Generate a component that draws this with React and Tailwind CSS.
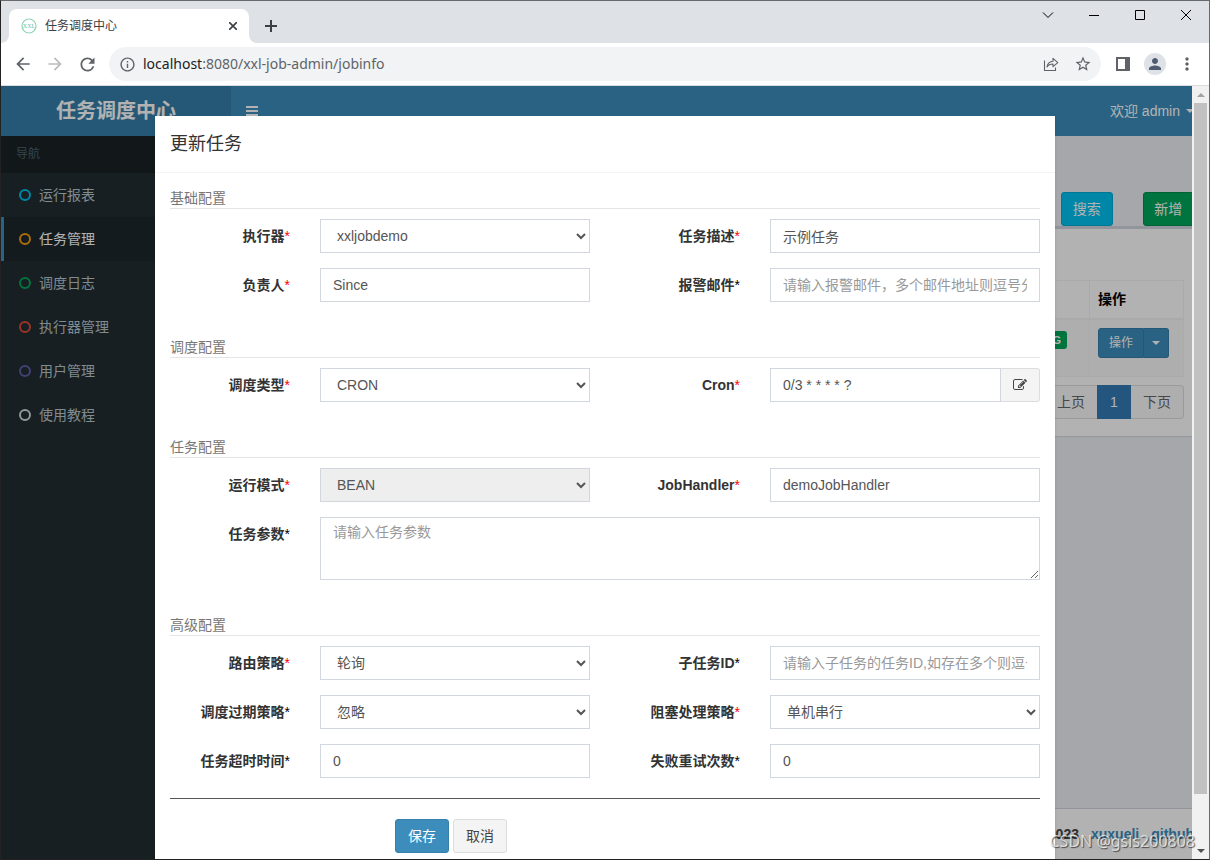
import { MdArrowBack, MdArrowForward, MdRefresh, MdInfoOutline, MdStarBorder, MdPerson, MdMoreVert } from "react-icons/md";
import clsx from "clsx";

const NAV = [
  { text: "运行报表", color: "border-[#00c0ef]" },
  { text: "任务管理", color: "border-[#f39c12]", active: true },
  { text: "调度日志", color: "border-[#00a65a]" },
  { text: "执行器管理", color: "border-[#dd4b39]" },
  { text: "用户管理", color: "border-[#605ca8]" },
  { text: "使用教程", color: "border-[#d2d6de]" },
];

function Caret({ className }) {
  return (
    <svg viewBox="0 0 8 4" className={clsx("w-2 h-1 fill-current", className)} aria-hidden="true">
      <path d="M0 0h8L4 4z" />
    </svg>
  );
}

function EditIcon() {
  return (
    <svg viewBox="0 0 1792 1792" className="w-3.5 h-3.5 fill-current" aria-hidden="true">
      <path d="M888 1184l116-116-152-152-116 116v56h96v96h56zm440-720q-16-16-33 1l-350 350q-17 17-1 33t33-1l350-350q17-17 1-33zm80 594v190q0 119-84.5 203.5t-203.5 84.5h-832q-119 0-203.5-84.5t-84.5-203.5v-832q0-119 84.5-203.5t203.5-84.5h832q63 0 117 25 15 7 18 23 3 17-9 29l-49 49q-14 14-32 8-23-6-45-6h-832q-66 0-113 47t-47 113v832q0 66 47 113t113 47h832q66 0 113-47t47-113v-126q0-13 9-22l64-64q15-15 35-7t20 29zm-96-738l288 288-672 672h-288v-288zm444 132l-92 92-288-288 92-92q28-28 68-28t68 28l152 152q28 28 28 68t-28 68z" />
    </svg>
  );
}

function WindowButton({ label, children }) {
  return (
    <button aria-label={label} className="w-[46px] h-7 flex items-center justify-center">
      <svg viewBox="0 0 12 12" className="w-3 h-3 fill-none stroke-black" shapeRendering="geometricPrecision">
        {children}
      </svg>
    </button>
  );
}

function TabStrip() {
  return (
    <div className="h-[42px] bg-[#dee1e6] flex justify-between">
      <div className="flex items-end">
        <svg viewBox="0 0 8 8" className="w-2 h-2 fill-white" aria-hidden="true">
          <path d="M8 0v8H0a8 8 0 0 0 8-8z" />
        </svg>
        <div className="w-60 h-[34px] bg-white rounded-t-lg flex items-center pl-3 pr-2 gap-2">
          <svg viewBox="0 0 16 16" className="w-4 h-4" aria-hidden="true">
            <circle cx="8" cy="8" r="7" fill="none" stroke="#8fd3b5" strokeWidth="1.2" />
            <text x="8" y="10" textAnchor="middle" fontSize="6" fill="#6cc09b" fontFamily="Liberation Serif">XXL</text>
          </svg>
          <span className="flex-1 text-xs text-[#3c4043]">任务调度中心</span>
          <button aria-label="关闭标签页" className="w-4 h-4 flex items-center justify-center">
            <svg viewBox="0 0 8 8" className="w-2 h-2 stroke-[#3c4043] fill-none" strokeWidth="1.6">
              <path d="M0 0l8 8M8 0L0 8" />
            </svg>
          </button>
        </div>
        <svg viewBox="0 0 8 8" className="w-2 h-2 fill-white" aria-hidden="true">
          <path d="M0 0v8h8a8 8 0 0 1-8-8z" />
        </svg>
        <button aria-label="新标签页" className="w-7 h-[34px] flex items-center justify-center">
          <svg viewBox="0 0 12 12" className="w-3 h-3 stroke-[#3c4043] fill-none" strokeWidth="2">
            <path d="M6 0v12M0 6h12" />
          </svg>
        </button>
      </div>
      <div className="flex">
        <WindowButton label="搜索标签页">
          <path d="M1 3.5l5 5 5-5" />
        </WindowButton>
        <WindowButton label="最小化">
          <path d="M1 6.5h10" />
        </WindowButton>
        <WindowButton label="最大化">
          <path d="M1.5 1.5h9v9h-9z" />
        </WindowButton>
        <WindowButton label="关闭">
          <path d="M1 1l10 10M11 1L1 11" />
        </WindowButton>
      </div>
    </div>
  );
}

function ToolButton({ label, children, className }) {
  return (
    <button aria-label={label} className={clsx("w-7 h-7 flex items-center justify-center", className)}>
      {children}
    </button>
  );
}

function Toolbar() {
  return (
    <div className="h-[43px] bg-white border-b border-[#dadce0] flex items-center pl-2 pr-2 gap-1 text-[#5f6368]">
      <ToolButton label="后退"><MdArrowBack size={20} /></ToolButton>
      <ToolButton label="前进" className="text-[#babcbe]"><MdArrowForward size={20} /></ToolButton>
      <ToolButton label="重新加载"><MdRefresh size={21} /></ToolButton>
      <div className="flex-1 h-[34px] mx-1 pl-2.5 pr-1 rounded-full bg-[#f1f3f4] flex items-center gap-1">
        <MdInfoOutline size={17} className="shrink-0" />
        <div className="flex-1 pl-[3px] text-sm font-['Noto_Sans',sans-serif]">
          <span className="text-[#202124]">localhost</span>:8080/xxl-job-admin/jobinfo
        </div>
        <ToolButton label="分享">
          <svg viewBox="0 0 16 16" className="w-4 h-4 fill-none stroke-[#5f6368]" strokeWidth="1.1">
            <path d="M1.500 4.500v10h11v-3" />
            <path d="M4 11c.6-3.600 2.600-5.500 6-5.700V2.300L14.800 6.600 10 10.700V8c-2.700 0-4.600.8-6 3z" strokeLinejoin="round" />
          </svg>
        </ToolButton>
        <ToolButton label="收藏"><MdStarBorder size={18} /></ToolButton>
      </div>
      <ToolButton label="侧边栏">
        <svg viewBox="0 0 14 14" className="w-3.5 h-3.5">
          <path d="M1 1h12v12H1z" fill="none" stroke="#5f6368" strokeWidth="2" />
          <path d="M9 1h4v12H9z" fill="#5f6368" />
        </svg>
      </ToolButton>
      <ToolButton label="用户">
        <span className="w-[22px] h-[22px] rounded-full bg-[#dee1e6] text-[#4f5b70] flex items-center justify-center">
          <MdPerson size={18} />
        </span>
      </ToolButton>
      <ToolButton label="更多"><MdMoreVert size={20} /></ToolButton>
    </div>
  );
}

function Sidebar() {
  return (
    <aside className="w-[230px] shrink-0 bg-[#222d32]">
      <div className="bg-[#1a2226] text-[#4b646f] text-xs leading-[17px] px-[15px] py-2.5">导航</div>
      <nav>
        {NAV.map((item) => (
          <a
            key={item.text}
            href="#"
            className={clsx(
              "h-11 flex items-center gap-2 pl-[15px] border-l-[3px]",
              item.active ? "bg-[#1e282c] border-[#3c8dbc] text-white" : "border-transparent text-[#b8c7ce]"
            )}
          >
            <span className={clsx("w-3 h-3 rounded-full border-2", item.color)} />
            {item.text}
          </a>
        ))}
      </nav>
    </aside>
  );
}

function JobPage() {
  return (
    <div className="h-full flex flex-col">
      <header className="h-[50px] shrink-0 bg-[#3c8dbc] text-white flex items-center">
        <a href="#" className="w-[230px] h-full bg-[#367fa9] flex items-center justify-center text-xl font-bold">
          任务调度中心
        </a>
        <button aria-label="菜单" className="flex-1 pl-[15px]">
          <svg viewBox="0 0 12 10" className="w-3 h-2.5 fill-current">
            <path d="M0 0h12v2H0zM0 4h12v2H0zM0 8h12v2H0z" />
          </svg>
        </button>
        <a href="#" className="px-[15px] flex items-center gap-1.5">
          欢迎 admin <Caret />
        </a>
      </header>
      <div className="flex-1 min-h-0 flex">
        <Sidebar />
        <main className="flex-1 min-w-0 bg-[#ecf0f5] flex flex-col justify-between">
          <div className="px-[15px] pt-14">
            <div className="grid grid-cols-12 gap-[30px]">
              <button className="col-start-11 h-[34px] rounded-[3px] border border-[#00acd6] bg-[#00c0ef] text-white">搜索</button>
              <button className="h-[34px] rounded-[3px] border border-[#008d4c] bg-[#00a65a] text-white">新增</button>
            </div>
            <div className="bg-white border-t-[3px] border-[#d2d6de] rounded-[3px] shadow-[0_1px_1px_rgba(0,0,0,0.1)] px-2.5 pt-[51px] pb-[17px]">
              <table className="w-full border-collapse">
                <thead>
                  <tr className="h-[38px]">
                    <th className="border border-b-2 border-[#f4f4f4]" />
                    <th className="w-[94px] border border-b-2 border-[#f4f4f4] px-2 text-left font-bold text-black">操作</th>
                  </tr>
                </thead>
                <tbody>
                  <tr className="h-[58px] bg-[#f9f9f9]">
                    <td className="border border-[#f4f4f4] pr-[22px] py-2.5 align-top text-right">
                      <span className="inline-block h-[18px] leading-[18px] px-1.5 rounded-[3px] bg-[#00a65a] text-white text-[11px] font-bold align-top mt-px">
                        RUNNING
                      </span>
                    </td>
                    <td className="border border-[#f4f4f4] px-2 py-2 align-top">
                      <div className="flex h-[30px] text-white text-xs">
                        <button className="w-[46px] rounded-l-[3px] border border-[#367fa9] bg-[#3c8dbc]">操作</button>
                        <button aria-label="展开" className="w-[25px] rounded-r-[3px] border border-l-0 border-[#367fa9] bg-[#3c8dbc] flex items-center justify-center">
                          <Caret />
                        </button>
                      </div>
                    </td>
                  </tr>
                </tbody>
              </table>
              <div className="flex justify-end mt-2 text-[#666]">
                <button className="h-[34px] px-3 border border-r-0 border-[#ddd] bg-[#fafafa] rounded-l">上页</button>
                <button className="h-[34px] w-[34px] bg-[#337ab7] text-white">1</button>
                <button className="h-[34px] px-3 border border-l-0 border-[#ddd] bg-[#fafafa] rounded-r">下页</button>
              </div>
            </div>
          </div>
          <footer className="bg-white border-t border-[#d2d6de] p-[15px] flex justify-end gap-3 font-bold text-[#444]">
            <span>Copyright © 2015-2023</span>
            <a href="#" className="text-[#3c8dbc]">xuxueli</a>
            <a href="#" className="text-[#3c8dbc]">github</a>
          </footer>
        </main>
      </div>
    </div>
  );
}

const CONTROL =
  "block w-full h-[34px] px-3 py-1.5 text-sm leading-5 text-[#555] bg-white border border-[#d2d6de] rounded-none placeholder:text-[#999] disabled:bg-[#eee] disabled:opacity-100";

function Section({ title, children }) {
  return (
    <section className="mb-5">
      <h5 className="text-sm leading-5 text-[#777] border-b border-[#e5e5e5] mb-2.5">{title}</h5>
      <div className="-mx-[15px] grid grid-cols-12">{children}</div>
    </section>
  );
}

function Field({ id, label, required, wide, children }) {
  return (
    <>
      <label htmlFor={id} className="col-span-2 px-[15px] pt-[7px] text-right font-bold text-[#333]">
        {label}
        <span className={clsx("font-normal", required ? "text-[#ff0000]" : "text-black")}>*</span>
      </label>
      <div className={clsx("px-[15px] mb-[15px]", wide ? "col-span-10" : "col-span-4")}>{children}</div>
    </>
  );
}

function TextField({ id, label, required, value, placeholder }) {
  return (
    <Field id={id} label={label} required={required}>
      <input id={id} type="text" className={CONTROL} defaultValue={value} placeholder={placeholder} />
    </Field>
  );
}

function SelectField({ id, label, required, value, disabled }) {
  return (
    <Field id={id} label={label} required={required}>
      <select id={id} className={CONTROL} disabled={disabled}>
        <option>{value}</option>
      </select>
    </Field>
  );
}

function UpdateModal() {
  return (
    <div role="dialog" aria-labelledby="modal-title" className="w-full max-w-[900px] mx-auto mt-[30px] bg-white shadow-[0_2px_3px_rgba(0,0,0,0.125)]">
      <div className="p-[15px] border-b border-[#f4f4f4]">
        <h4 id="modal-title" className="text-lg leading-[26px] text-[#333]">更新任务</h4>
      </div>
      <form className="p-[15px]">
        <Section title="基础配置">
          <SelectField id="jobGroup" label="执行器" required value="xxljobdemo" />
          <TextField id="jobDesc" label="任务描述" required value="示例任务" />
          <TextField id="author" label="负责人" required value="Since" />
          <TextField id="alarmEmail" label="报警邮件" placeholder="请输入报警邮件，多个邮件地址则逗号分隔" />
        </Section>
        <Section title="调度配置">
          <SelectField id="scheduleType" label="调度类型" required value="CRON" />
          <Field id="cron" label="Cron" required>
            <div className="flex">
              <input id="cron" type="text" className={CONTROL} defaultValue="0/3 * * * * ?" />
              <button type="button" aria-label="编辑" className="w-[39px] shrink-0 rounded-r-[3px] border border-l-0 border-[#ddd] bg-[#f4f4f4] text-[#444] flex items-center justify-center">
                <EditIcon />
              </button>
            </div>
          </Field>
        </Section>
        <Section title="任务配置">
          <SelectField id="glueType" label="运行模式" required value="BEAN" disabled />
          <TextField id="handler" label="JobHandler" required value="demoJobHandler" />
          <Field id="param" label="任务参数" wide>
            <textarea
              id="param"
              placeholder="请输入任务参数"
              className="block w-full h-[63px] px-3 py-1 text-sm leading-5 text-[#555] border border-[#d2d6de] placeholder:text-[#999]"
            />
          </Field>
        </Section>
        <Section title="高级配置">
          <SelectField id="route" label="路由策略" required value="轮询" />
          <TextField id="childJob" label="子任务ID" placeholder="请输入子任务的任务ID,如存在多个则逗号分隔" />
          <SelectField id="misfire" label="调度过期策略" value="忽略" />
          <SelectField id="block" label="阻塞处理策略" required value="单机串行" />
          <TextField id="timeout" label="任务超时时间" value="0" />
          <TextField id="retry" label="失败重试次数" value="0" />
        </Section>
        <hr className="-mt-[15px] mb-5 border-[#555]" />
        <div className="-mx-[15px] grid grid-cols-4">
          <div className="col-start-2 col-span-2 px-[15px] flex gap-1">
            <button type="submit" className="h-[34px] px-3 rounded-[3px] border border-[#367fa9] bg-[#3c8dbc] text-white">保存</button>
            <button type="button" className="h-[34px] px-3 rounded-[3px] border border-[#ddd] bg-[#f4f4f4] text-[#444]">取消</button>
          </div>
        </div>
      </form>
    </div>
  );
}

function Scrollbar() {
  return (
    <div className="absolute right-0 inset-y-0 w-[17px] bg-[#f1f1f1] flex flex-col items-center">
      <div className="h-[17px] flex items-center text-[#a3a3a3]"><Caret className="rotate-180" /></div>
      <div className="flex-[691] w-[13px] bg-[#c1c1c1]" />
      <div className="flex-[48]" />
      <div className="h-[17px] flex items-center text-[#505050]"><Caret /></div>
    </div>
  );
}

export default function App() {
  return (
    <div className="h-screen flex flex-col overflow-hidden border border-t-[#68696d] border-r-[#68696d] border-b-[#222] border-l-[#222] text-sm leading-5 font-['Liberation_Sans','Noto_Sans_CJK_SC',sans-serif]">
      <TabStrip />
      <Toolbar />
      <div className="flex-1 min-h-0 relative overflow-hidden">
        <JobPage />
        <div className="absolute inset-0 overflow-hidden bg-black/30">
          <UpdateModal />
        </div>
        <Scrollbar />
        <div className="absolute right-3.5 bottom-1.5 text-base leading-6 text-white/70 font-['Noto_Sans',sans-serif] [text-shadow:1px_1px_1px_rgba(0,0,0,0.6)]">
          CSDN @gsls200808
        </div>
      </div>
    </div>
  );
}
